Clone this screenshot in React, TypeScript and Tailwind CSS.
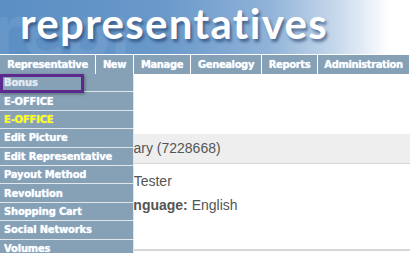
import React from "react";

const navItems: { label: string; w: string }[] = [
  { label: "Representative", w: "w-[96px]" },
  { label: "New", w: "w-[38px]" },
  { label: "Manage", w: "w-[57px]" },
  { label: "Genealogy", w: "w-[71px]" },
  { label: "Reports", w: "w-[56px]" },
  { label: "Administration", w: "flex-1" },
];

const menuItems: { label: string; cls?: string; focused?: boolean }[] = [
  { label: "Bonus", focused: true },
  { label: "E-OFFICE" },
  { label: "E-OFFICE", cls: "text-[#ffff00]" },
  { label: "Edit Picture" },
  { label: "Edit Representative" },
  { label: "Payout Method" },
  { label: "Revolution" },
  { label: "Shopping Cart" },
  { label: "Social Networks" },
  { label: "Volumes" },
];

export default function App() {
  return (
    <div className="relative w-[410px] h-[253px] overflow-hidden bg-white">
      {/* Header banner */}
      <div className="relative h-[54px] overflow-hidden bg-[linear-gradient(to_right,#5b8ec4_0%,#6a99ca_40%,#8fb2d8_65%,#c6d8eb_82%,#ffffff_95%)]">
        <div
          aria-hidden="true"
          className="absolute inset-0 overflow-hidden pointer-events-none select-none"
        >
          <div
            className="absolute left-[-6px] top-[0px] h-[54px] text-[80px] leading-[54px] font-bold text-white/[0.07] whitespace-nowrap"
            style={{ fontFamily: "Lato, 'Open Sans', sans-serif" }}
          >
            repr
          </div>
        </div>
        <div
          className="relative pl-[20px] pt-[2px] text-[42px] leading-[42px] font-bold text-white whitespace-nowrap tracking-[1.3px] [text-shadow:2px_3px_3px_rgba(20,45,90,0.55)]"
          style={{ fontFamily: "Lato, 'Open Sans', sans-serif" }}
        >
          representatives
        </div>
      </div>

      {/* Nav bar */}
      <div
        className="flex h-[20px] border-t border-white bg-[#86a1b6] text-[10px] font-bold text-white tracking-[-0.4px] [text-shadow:0_0_1px_#d8ecff]"
        style={{ fontFamily: "'DejaVu Sans', Verdana, sans-serif" }}
      >
        {navItems.map((it) => (
          <div
            key={it.label}
            className={`${it.w} shrink-0 flex items-center justify-center border-r border-white whitespace-nowrap leading-none overflow-hidden`}
          >
            {it.label}
          </div>
        ))}
      </div>

      {/* Content */}
      <div
        className="pt-[60px] text-[14px] text-[#555555]"
        style={{ fontFamily: "'Liberation Sans', Arial, sans-serif" }}
      >
        <div className="h-[30px] bg-[#eeeeee] border-b border-[#d6d6d6] flex items-center pl-[93px] whitespace-nowrap">
          Summary (7228668)
        </div>
        <div className="pt-[5px]">
          <div className="h-[24px] flex items-center pl-[87px] whitespace-nowrap">
            <span className="font-bold">Name:&nbsp;</span>Tester
          </div>
          <div className="h-[24px] flex items-center pl-[117px] whitespace-nowrap">
            <span className="font-bold">Language:</span>&nbsp;English
          </div>
        </div>
        <div className="mt-[32px] border-t-2 border-[#d6d6d6]" />
      </div>

      {/* Dropdown menu */}
      <div
        className="absolute left-0 top-[74px] w-[134px] bg-[#86a1b6] border-r border-[#dfe6ec] text-[10px] font-bold text-white tracking-[-0.2px] [text-shadow:0_0_1px_#d8ecff]"
        style={{ fontFamily: "'DejaVu Sans', Verdana, sans-serif" }}
      >
        {menuItems.map((it, i) => (
          <div
            key={i}
            className={`relative h-[18.4px] border-b border-[#dfe6ec] flex items-center pl-[4px] whitespace-nowrap ${it.cls ?? ""}`}
          >
            {it.focused ? (
              <>
                <span className="text-[#e2e8ee]">{it.label}</span>
                <div className="absolute left-0 top-0 w-[84px] h-[19px] border-[3px] border-[#5c2a8c] shadow-[1px_1px_3px_rgba(0,0,0,0.35)]" />
              </>
            ) : (
              it.label
            )}
          </div>
        ))}
      </div>
    </div>
  );
}
